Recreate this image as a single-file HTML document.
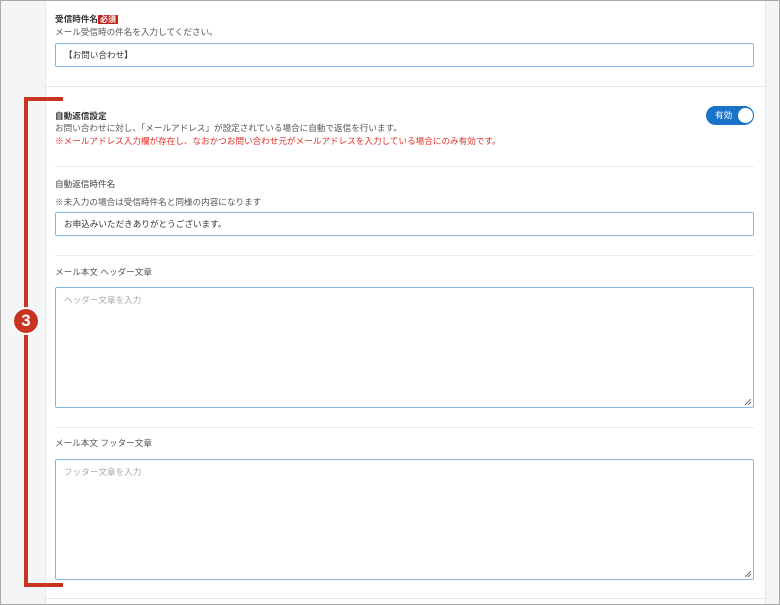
<!DOCTYPE html>
<html><head><meta charset="utf-8"><style>
*{margin:0;padding:0;box-sizing:border-box}
body{width:780px;height:605px;position:relative;overflow:hidden;background:#f4f5f7;font-family:"Liberation Sans","Noto Sans CJK JP",sans-serif;font-size:8.6px;color:#333}
.frame{position:absolute;left:0;top:0;width:780px;height:605px;border:1px solid #a9a9a9;z-index:10;pointer-events:none}
.panel{position:absolute;left:45px;top:0;width:721px;height:605px;background:#fff;border-left:1px solid #e6e7ea;border-right:1px solid #e6e7ea}
.a{position:absolute;white-space:nowrap}
.inp{position:absolute;left:55px;width:699px;border:1px solid #86b6e2;border-radius:2px;background:#fff;padding-left:8px;font-size:8.6px;color:#333}
.hr{position:absolute;left:55px;width:699px;height:1px;background:#ebebeb}
.ph{color:#aaa}
.grip{position:absolute;right:2px;bottom:2px;width:6px;height:6px;background:linear-gradient(135deg,transparent 45%,#777 45%,#777 55%,transparent 55%,transparent 70%,#777 70%,#777 80%,transparent 80%)}
</style></head><body>
<div class="panel"></div>
<div class="a" style="left:55px;top:13px;font-weight:bold">受信時件名<span style="background:#c0261c;color:#fff;font-size:8px;padding:0 2px">必須</span></div>
<div class="a" style="left:55px;top:26px;color:#555">メール受信時の件名を入力してください。</div>
<div class="inp" style="top:43px;height:24px;line-height:22px">【お問い合わせ】</div>
<div style="position:absolute;left:46px;top:86px;width:719px;height:1px;background:#e6e6e6"></div>

<div class="a" style="left:55px;top:110px;font-weight:bold">自動返信設定</div>
<div class="a" style="left:55px;top:122px;color:#555">お問い合わせに対し、「メールアドレス」が設定されている場合に自動で返信を行います。</div>
<div class="a" style="left:55px;top:135px;color:#e0302a">※メールアドレス入力欄が存在し、なおかつお問い合わせ元がメールアドレスを入力している場合にのみ有効です。</div>
<div style="position:absolute;left:706px;top:106px;width:48px;height:19px;border-radius:10px;background:#1a73c9"></div>
<div class="a" style="left:715px;top:109px;color:#fff">有効</div>
<div style="position:absolute;left:737px;top:107px;width:17px;height:17px;border-radius:50%;background:#fff;border:1px solid #1a73c9"></div>
<div class="hr" style="top:166px"></div>

<div class="a" style="left:55px;top:178px;color:#444">自動返信時件名</div>
<div class="a" style="left:55px;top:196px;color:#555">※未入力の場合は受信時件名と同様の内容になります</div>
<div class="inp" style="top:212px;height:24px;line-height:22px">お申込みいただきありがとうございます。</div>
<div class="hr" style="top:255px"></div>

<div class="a" style="left:55px;top:266px;color:#555">メール本文 ヘッダー文章</div>
<div class="inp" style="top:287px;height:121px;padding-top:6px"><span class="ph">ヘッダー文章を入力</span><div class="grip"></div></div>
<div class="hr" style="top:427px"></div>

<div class="a" style="left:55px;top:437px;color:#555">メール本文 フッター文章</div>
<div class="inp" style="top:459px;height:121px;padding-top:6px"><span class="ph">フッター文章を入力</span><div class="grip"></div></div>
<div style="position:absolute;left:46px;top:598px;width:719px;height:1px;background:#e6e6e6"></div>

<div style="position:absolute;left:24px;top:97px;width:4px;height:490px;background:#c8341f"></div>
<div style="position:absolute;left:24px;top:97px;width:39px;height:4px;background:#c8341f"></div>
<div style="position:absolute;left:24px;top:583px;width:39px;height:4px;background:#c8341f"></div>
<div style="position:absolute;left:12px;top:307px;width:28px;height:28px;border-radius:50%;background:#fff"></div>
<div style="position:absolute;left:14px;top:309px;width:24px;height:24px;border-radius:50%;background:#c8341f;color:#fff;font-weight:bold;font-size:17px;line-height:24px;text-align:center">3</div>
<div class="frame"></div>
</body></html>
